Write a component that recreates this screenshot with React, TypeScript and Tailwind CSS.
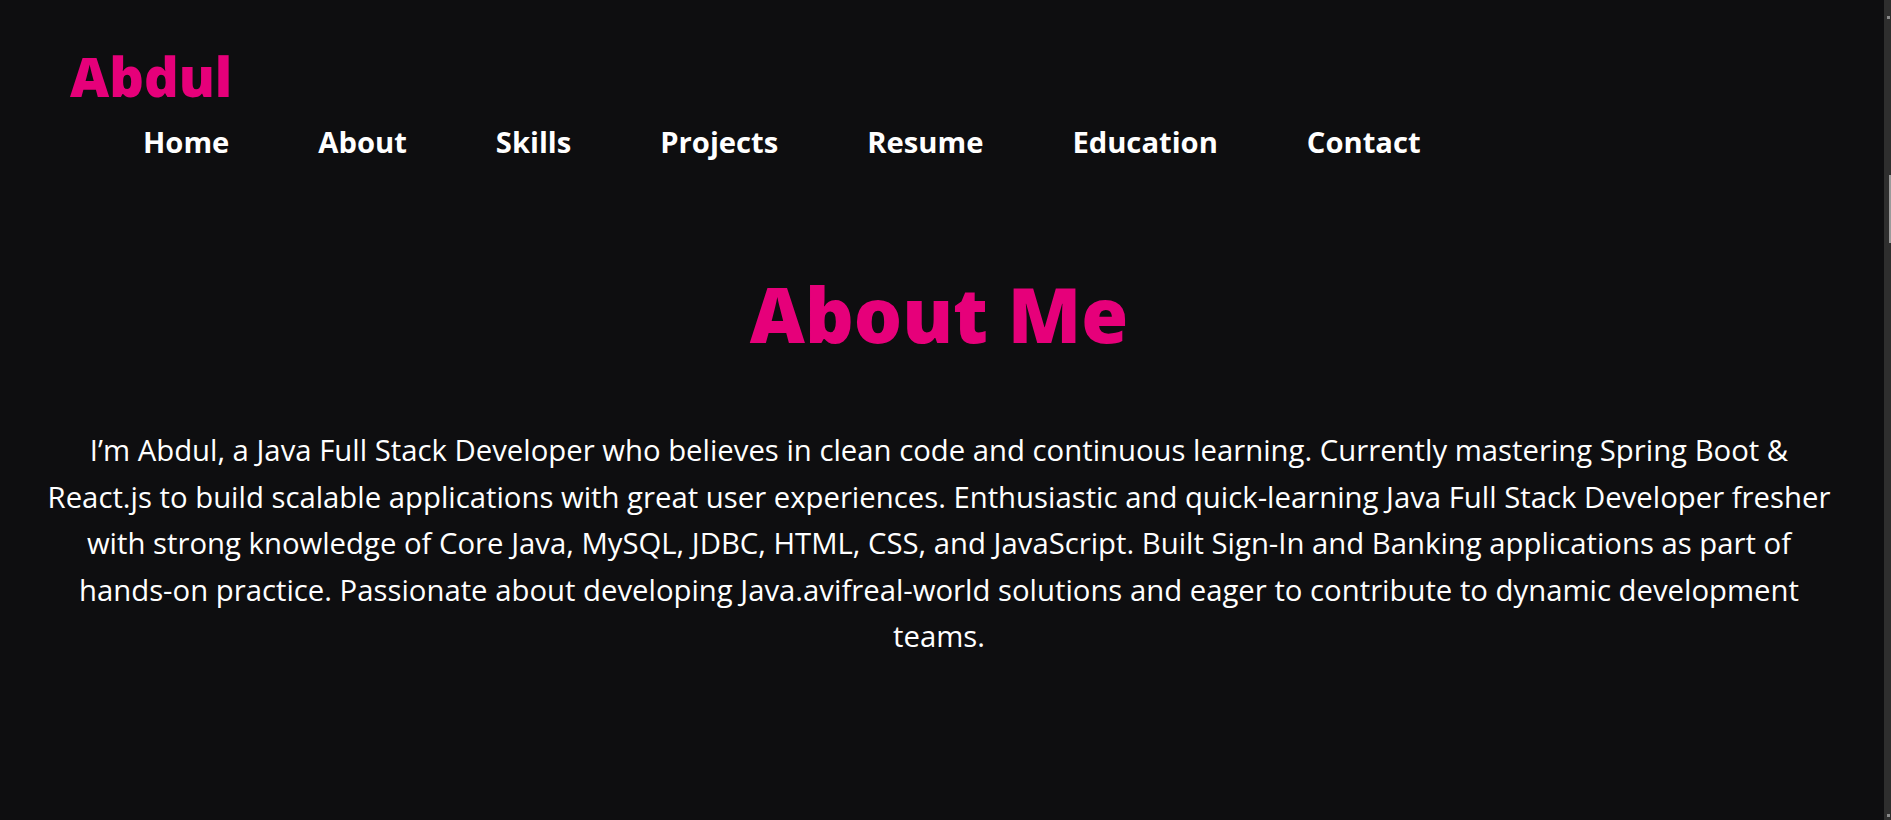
import React from "react";

const navItems = ["Home", "About", "Skills", "Projects", "Resume", "Education", "Contact"];

export default function App() {
  return (
    <div
      className="flex h-[820px] w-full overflow-hidden bg-[#0e0e10] text-white"
      style={{ fontFamily: '"Open Sans", "Noto Sans", sans-serif' }}
    >
      <div className="flex-1 min-w-0">
        <header className="pl-[70px] pt-[46px]">
          <div className="text-[54px] leading-[60px] font-extrabold text-[#e6007a]">Abdul</div>
          <nav className="mt-[16px] pl-[73px]">
            <ul className="flex gap-[89px]">
              {navItems.map((n) => (
                <li key={n} className="text-[29.2px] leading-[40px] font-bold text-white">
                  {n}
                </li>
              ))}
            </ul>
          </nav>
        </header>
        <section className="mt-[107px] flex flex-col items-center pr-[6px]">
          <h1 className="text-[76px] leading-[90px] font-extrabold text-[#e6007a]">About Me</h1>
          <p className="mt-[68px] w-[1800px] text-center text-[29.3px] leading-[46.5px] text-white">
            I’m Abdul, a Java Full Stack Developer who believes in clean code and continuous learning. Currently
            mastering Spring Boot &amp; React.js to build scalable applications with great user experiences.
            Enthusiastic and quick-learning Java Full Stack Developer fresher with strong knowledge of Core Java,
            MySQL, JDBC, HTML, CSS, and JavaScript. Built Sign-In and Banking applications as part of hands-on
            practice. Passionate about developing Java.avifreal-world solutions and eager to contribute to dynamic
            development teams.
          </p>
        </section>
      </div>
      <div className="relative w-[7px] shrink-0 bg-[#2e2e2e]">
        <div className="absolute right-0 top-[175px] h-[68px] w-[2px] bg-[#9a9a9a]" />
        <div className="absolute right-[1px] top-[16px] h-[3px] w-[3px] bg-[#8a8a8a]" />
        <div className="absolute right-[1px] bottom-[3px] h-[3px] w-[3px] bg-[#8a8a8a]" />
      </div>
    </div>
  );
}
